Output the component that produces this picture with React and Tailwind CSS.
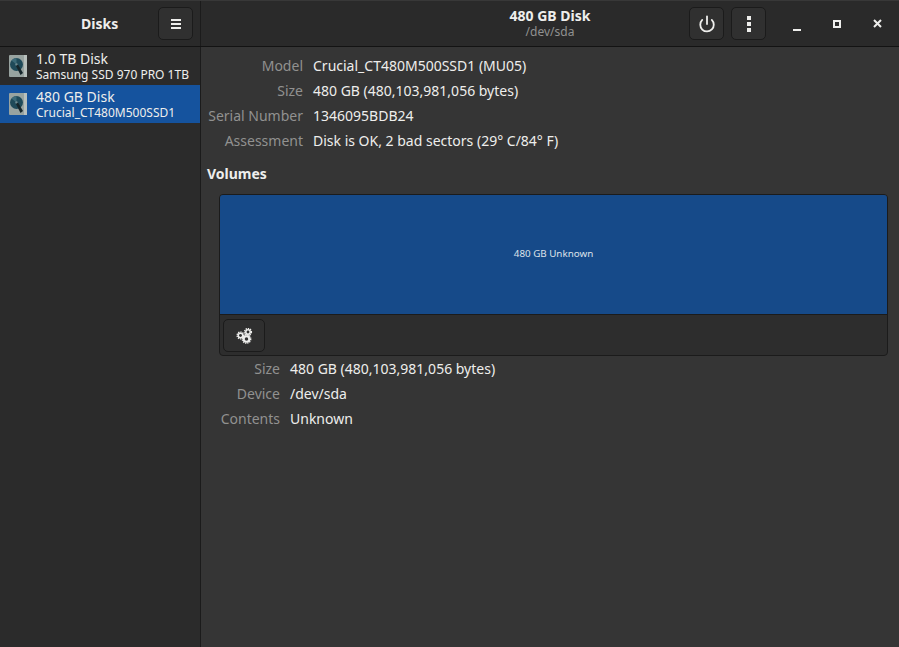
import { Power } from "lucide-react";

const font = { fontFamily: '"Noto Sans", sans-serif' };

function DiskIcon() {
  return (
    <svg width="18" height="22" viewBox="0 0 18 22" className="shrink-0">
      <rect width="18" height="22" rx="1" fill="#98a3a0" />
      <rect x="15" y="0" width="3" height="22" fill="#b8c0bd" />
      <circle cx="7.5" cy="9.5" r="6.5" fill="#1f4a59" />
      <path d="M7.5 9.5 L2.5 5.5 A6.5 6.5 0 0 1 7.5 3 Z" fill="#3c6a78" />
      <circle cx="7.5" cy="9.5" r="1.2" fill="#6f8a90" />
      <path d="M7 11 L11.5 20 L14 18 L9 9.5 Z" fill="#16262b" />
    </svg>
  );
}

function Gear({ cx, cy, r }) {
  return (
    <g>
      <circle cx={cx} cy={cy} r={r - 0.6} fill="none" stroke="#eeeeec" strokeWidth="1.4" strokeDasharray="1.3 0.9" />
      <circle cx={cx} cy={cy} r={r - 1} fill="#eeeeec" />
      <circle cx={cx} cy={cy} r={r * 0.36} fill="#2f2f2f" />
    </g>
  );
}

function GearsIcon() {
  return (
    <svg width="17" height="17" viewBox="0 0 17 17">
      <Gear cx={4.5} cy={8.5} r={4} />
      <Gear cx={12} cy={5} r={4} />
      <Gear cx={10.5} cy={12} r={4.8} />
    </svg>
  );
}

function HeaderButton({ children }) {
  return (
    <div className="flex h-[33px] w-[35px] items-center justify-center rounded-[5px] border border-[#1b1b1b] bg-[#303030]">
      {children}
    </div>
  );
}

function DiskRow({ title, model, selected }) {
  return (
    <div className={`flex h-[38px] items-center gap-[9px] pl-[9px] ${selected ? "bg-[#15539e]" : ""}`}>
      <DiskIcon />
      <div className="min-w-0 text-[#eeeeec]">
        <div className="text-[14px] leading-[17px] whitespace-nowrap">{title}</div>
        <div className="text-[12px] leading-[15px] whitespace-nowrap">{model}</div>
      </div>
    </div>
  );
}

function InfoRows({ rows, labelWidth }) {
  return (
    <div className="flex flex-col">
      {rows.map(([label, value]) => (
        <div key={label} className="flex h-[25px] items-center gap-[10px] text-[14px] whitespace-nowrap">
          <div className={`${labelWidth} shrink-0 text-right text-[#919190]`}>{label}</div>
          <div className="text-[#eeeeec]">{value}</div>
        </div>
      ))}
    </div>
  );
}

export default function App() {
  return (
    <div className="flex h-[647px] w-[899px] flex-col overflow-hidden bg-[#353535]" style={font}>
      {/* Header bar */}
      <div className="flex h-[47px] shrink-0 border-t border-b border-t-[#383838] border-b-[#131313] bg-[#2a2a2a]">
        <div className="flex w-[201px] shrink-0 items-center border-r border-[#1b1b1b] pl-[81px]">
          <div className="w-[77px] text-[14px] font-bold text-[#eeeeec]">Disks</div>
          <HeaderButton>
            <svg width="10" height="10" viewBox="0 0 10 10" fill="#eeeeec">
              <rect width="10" height="2" />
              <rect y="4" width="10" height="2" />
              <rect y="8" width="10" height="2" />
            </svg>
          </HeaderButton>
        </div>
        <div className="flex flex-1 items-center">
          <div className="w-[488px] shrink-0 pl-[210px] text-center">
            <div className="text-[14px] leading-[16px] font-bold text-[#eeeeec]">480 GB Disk</div>
            <div className="text-[12px] leading-[15px] text-[#919190]">/dev/sda</div>
          </div>
          <div className="flex gap-[7px]">
            <HeaderButton>
              <Power size={18} color="#eeeeec" strokeWidth={2.4} />
            </HeaderButton>
            <HeaderButton>
              <svg width="4" height="16" viewBox="0 0 4 16" fill="#eeeeec">
                <rect width="4" height="4" />
                <rect y="6" width="4" height="4" />
                <rect y="12" width="4" height="4" />
              </svg>
            </HeaderButton>
          </div>
          <div className="ml-[11px] flex items-center text-[#eeeeec]">
            <div className="flex h-[16px] w-[40px] items-end justify-center">
              <div className="mb-[1px] h-[2px] w-[8px] bg-[#eeeeec]" />
            </div>
            <div className="flex h-[16px] w-[40px] items-center justify-center">
              <div className="size-[8px] border-2 border-[#eeeeec]" />
            </div>
            <div className="flex h-[16px] w-[40px] items-center justify-center">
              <svg width="9" height="9" viewBox="0 0 9 9" stroke="#eeeeec" strokeWidth="2">
                <path d="M1 1 L8 8 M8 1 L1 8" />
              </svg>
            </div>
          </div>
        </div>
      </div>

      <div className="flex min-h-0 flex-1">
        {/* Sidebar */}
        <div className="w-[201px] shrink-0 border-r border-[#1b1b1b] bg-[#2b2b2b]">
          <DiskRow title="1.0 TB Disk" model="Samsung SSD 970 PRO 1TB" />
          <DiskRow title="480 GB Disk" model="Crucial_CT480M500SSD1" selected />
        </div>

        {/* Main panel */}
        <div className="flex-1 pt-[6px] pl-[6px] pr-[11px]">
          <InfoRows
            labelWidth="w-[96px]"
            rows={[
              ["Model", "Crucial_CT480M500SSD1 (MU05)"],
              ["Size", "480 GB (480,103,981,056 bytes)"],
              ["Serial Number", "1346095BDB24"],
              ["Assessment", "Disk is OK, 2 bad sectors (29° C/84° F)"],
            ]}
          />
          <div className="mt-[11px] text-[14px] leading-[19px] font-bold text-[#eeeeec]">Volumes</div>
          <div className="mt-[11px] ml-[12px] overflow-hidden rounded-[4px] border border-[#1b1b1b] bg-[#2d2d2d]">
            <div className="flex h-[120px] items-center justify-center border-b border-[#1b1b1b] bg-[#164a89] text-[9.8px] text-[#dde2e9]">
              480 GB Unknown
            </div>
            <div className="flex h-[40px] items-center pl-[3px]">
              <div className="flex h-[33px] w-[42px] items-center justify-center rounded-[5px] border border-[#1b1b1b] bg-[#2f2f2f]">
                <GearsIcon />
              </div>
            </div>
          </div>
          <div className="ml-[12px]">
            <InfoRows
              labelWidth="w-[61px]"
              rows={[
                ["Size", "480 GB (480,103,981,056 bytes)"],
                ["Device", "/dev/sda"],
                ["Contents", "Unknown"],
              ]}
            />
          </div>
        </div>
      </div>
    </div>
  );
}
